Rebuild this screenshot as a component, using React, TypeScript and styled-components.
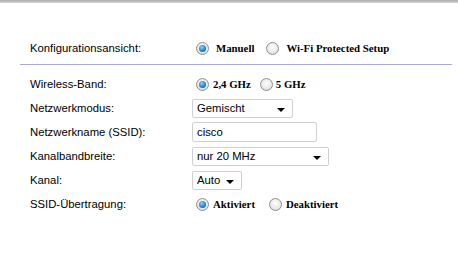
import styled, { createGlobalStyle } from 'styled-components'

const Global = createGlobalStyle`
  html, body {
    margin: 0;
    padding: 0;
    background: #ffffff;
  }
`

const Page = styled.div`
  width: 458px;
  height: 262px;
  background: #ffffff;
  font-family: "Liberation Sans", Arial, sans-serif;
  font-size: 11.3px;
  color: #000000;
`

const TopBar = styled.div`
  height: 3px;
  background: linear-gradient(to bottom, #a9a9a9, #d6d6d6);
`

const Content = styled.div`
  padding: 33px 6px 0 20px;
`

const Section = styled.div`
  padding-left: 10px;
  display: flex;
  flex-direction: column;
`

const Divider = styled.div`
  height: 1px;
  background: #a9a9dc;
  margin: 4px 0 7px;
`

const Row = styled.div`
  display: grid;
  grid-template-columns: 162px 1fr;
  align-items: center;
  height: 24px;
`

const Label = styled.div`
  white-space: nowrap;
`

const Options = styled.div`
  display: flex;
  align-items: center;
  padding-left: 4px;
`

const Option = styled.label<{ gap?: number }>`
  display: flex;
  align-items: center;
  margin-right: ${({ gap }) => gap ?? 10}px;
  font-family: "Liberation Serif", "Times New Roman", serif;
  font-weight: bold;
  font-size: 10.8px;
`

const RadioDot = styled.span<{ checked?: boolean; space?: number }>`
  box-sizing: border-box;
  width: 13px;
  height: 13px;
  border-radius: 50%;
  border: 1px solid #8f8f8f;
  background: radial-gradient(circle at 50% 40%, #ffffff 0%, #e6e6e6 65%, #c4c4c4 100%);
  margin-right: ${({ space }) => space ?? 6}px;
  display: flex;
  align-items: center;
  justify-content: center;

  &::after {
    content: '';
    display: ${({ checked }) => (checked ? 'block' : 'none')};
    width: 7px;
    height: 7px;
    border-radius: 50%;
    background: radial-gradient(circle at 40% 35%, #8ad6ff 0%, #1e83d6 55%, #0b4f96 100%);
  }
`

const SelectBox = styled.div<{ w: number }>`
  box-sizing: border-box;
  width: ${({ w }) => w}px;
  height: 19px;
  border: 1px solid #cfcfcf;
  border-radius: 2px;
  background: #ffffff;
  display: flex;
  align-items: center;
  justify-content: space-between;
  padding: 0 7px 0 4px;
`

const Arrow = styled.span`
  width: 0;
  height: 0;
  border-left: 4px solid transparent;
  border-right: 4px solid transparent;
  border-top: 4px solid #000000;
  margin-top: 3px;
`

const TextInput = styled.div`
  box-sizing: border-box;
  width: 125px;
  height: 20px;
  border: 1px solid #cfcfcf;
  border-radius: 2px;
  background: #ffffff;
  display: flex;
  align-items: center;
  padding: 0 4px;
`

const Radio = ({ label, checked, gap, space }: { label: string; checked?: boolean; gap?: number; space?: number }) => (
  <Option gap={gap}>
    <RadioDot checked={checked} space={space} />
    {label}
  </Option>
)

const Select = ({ value, w }: { value: string; w: number }) => (
  <SelectBox w={w}>
    <span>{value}</span>
    <Arrow />
  </SelectBox>
)

export default function App() {
  return (
    <Page>
      <Global />
      <TopBar />
      <Content>
        <Section>
          <Row>
            <Label>Konfigurationsansicht:</Label>
            <Options>
              <Radio label="Manuell" checked gap={12} space={7} />
              <Radio label="Wi-Fi Protected Setup" space={7} />
            </Options>
          </Row>
        </Section>
        <Divider />
        <Section>
          <Row>
            <Label>Wireless-Band:</Label>
            <Options>
              <Radio label="2,4 GHz" checked gap={9} space={4} />
              <Radio label="5 GHz" space={3} />
            </Options>
          </Row>
          <Row>
            <Label>Netzwerkmodus:</Label>
            <Select value="Gemischt" w={101} />
          </Row>
          <Row>
            <Label>Netzwerkname (SSID):</Label>
            <TextInput>cisco</TextInput>
          </Row>
          <Row>
            <Label>Kanalbandbreite:</Label>
            <Select value="nur 20 MHz" w={137} />
          </Row>
          <Row>
            <Label>Kanal:</Label>
            <Select value="Auto" w={50} />
          </Row>
          <Row>
            <Label>SSID-Übertragung:</Label>
            <Options>
              <Radio label="Aktiviert" checked gap={14} space={4} />
              <Radio label="Deaktiviert" space={4} />
            </Options>
          </Row>
        </Section>
      </Content>
    </Page>
  )
}
